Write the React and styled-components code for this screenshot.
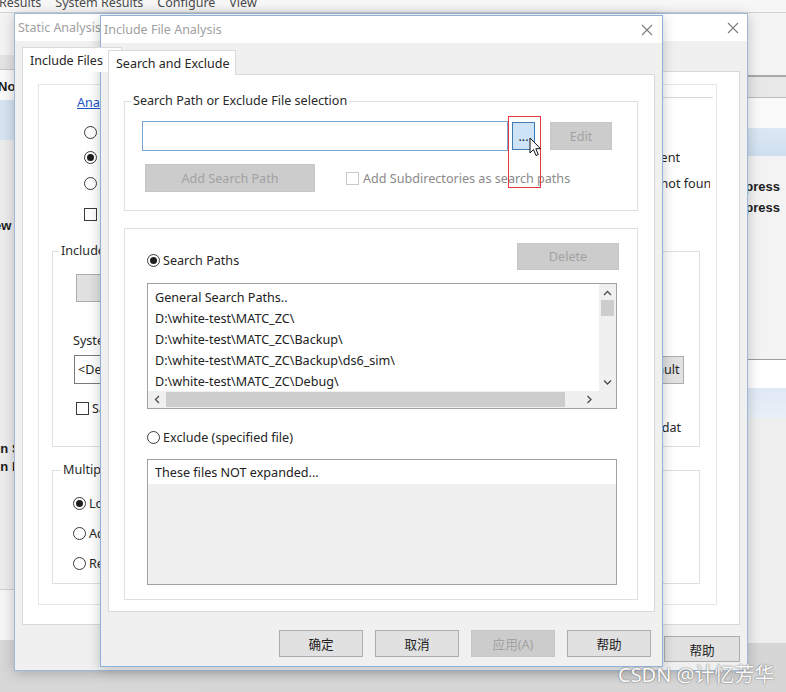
import React from "react";
import styled, { createGlobalStyle } from "styled-components";

const GlobalStyle = createGlobalStyle`
  * { box-sizing: border-box; }
  body {
    margin: 0;
    background: #d8d8d8;
    font-family: "Noto Sans", "Noto Sans CJK SC", sans-serif;
    font-size: 12.6px;
    color: #262626;
  }
`;

const Desktop = styled.div`
  position: relative;
  width: 786px;
  height: 692px;
  overflow: hidden;
  background: #d8d8d8;
`;

/* ---------- application behind the dialogs ---------- */

const AppFrame = styled.div`
  display: flex;
  flex-direction: column;
  height: 100%;
`;

const MenuBar = styled.div`
  height: 13px;
  flex-shrink: 0;
  display: flex;
  gap: 14px;
  overflow: hidden;
  background: #f7f7f7;
  border-bottom: 1px solid #d4d4d4;
  font-size: 12.5px;
  line-height: 12px;
  color: #4a4a4a;
`;

const MenuItem = styled.span`
  margin-top: -3px;
  white-space: nowrap;
  &:first-child {
    margin-left: -1px;
  }
`;

const Workspace = styled.div`
  flex: 1;
  display: flex;
  min-height: 0;
`;

const Pane = styled.div`
  display: flex;
  flex-direction: column;
  width: ${p => (p.$w ? `${p.$w}px` : "auto")};
  flex: ${p => (p.$w ? "none" : 1)};
  overflow: hidden;
`;

const Band = styled.div`
  height: ${p => (p.$h ? `${p.$h}px` : "auto")};
  flex: ${p => (p.$h ? "none" : 1)};
  background: ${p => p.$bg};
  border-bottom: ${p => (p.$line ? `${p.$lw || 1}px solid ${p.$line}` : "none")};
  display: flex;
  flex-direction: column;
  align-items: ${p => (p.$right ? "flex-end" : "flex-start")};
  padding-right: ${p => (p.$right ? 6 : 0)}px;
`;

const PaneText = styled.div`
  font-family: "Liberation Sans", Arial, sans-serif;
  font-weight: bold;
  font-size: 13px;
  line-height: 16px;
  color: #1c1c1c;
  white-space: nowrap;
  margin-top: ${p => p.$top || 0}px;
  margin-left: ${p => p.$shift || 0}px;
`;

/* ---------- windows ---------- */

const Window = styled.div`
  position: absolute;
  left: ${p => p.$x}px;
  top: ${p => p.$y}px;
  width: ${p => p.$w}px;
  height: ${p => p.$h}px;
  display: flex;
  flex-direction: column;
  background: #f0f0f0;
  border: 1px solid ${p => p.$edge};
  box-shadow: 0 2px 12px rgba(0, 0, 0, 0.22);
`;

const TitleBar = styled.div`
  height: 27px;
  flex-shrink: 0;
  display: flex;
  align-items: center;
  justify-content: space-between;
  padding: 0 ${p => p.$pr}px 0 ${p => p.$pl}px;
  background: #ffffff;
  color: #a0a0a0;
  font-size: 12.5px;
  white-space: nowrap;
`;

const WindowBody = styled.div`
  flex: 1;
  min-height: 0;
  display: flex;
  flex-direction: column;
  padding: ${p => p.$pad};
`;

const Tab = styled.div`
  align-self: flex-start;
  position: relative;
  z-index: 1;
  height: 25px;
  width: ${p => p.$w}px;
  padding: 0 7px;
  display: flex;
  align-items: center;
  background: #ffffff;
  border: 1px solid #d9d9d9;
  border-bottom: none;
  white-space: nowrap;
  overflow: hidden;
  font-size: 12.5px;
  color: #262626;
`;

const TabPanel = styled.div`
  flex: 1;
  min-height: 0;
  margin-top: -1px;
  background: #ffffff;
  border: 1px solid #d9d9d9;
  display: flex;
  flex-direction: column;
  padding: ${p => p.$pad};
`;

const InnerPanel = styled.div`
  flex: 1;
  min-height: 0;
  border: 1px solid #e6e6e6;
  padding: 11px 16px 0 13px;
  display: flex;
  flex-direction: column;
  overflow: hidden;
`;

const Footer = styled.div`
  flex-shrink: 0;
  display: flex;
  justify-content: flex-end;
  gap: ${p => p.$gap}px;
  margin-top: ${p => p.$mt}px;
  padding-right: ${p => p.$pr || 0}px;
`;

const GroupBox = styled.fieldset`
  margin: ${p => p.$mt || 0}px 0 0 0;
  min-width: 0;
  border: 1px solid #dfdfdf;
  padding: ${p => p.$pad};
  display: flex;
  flex-direction: column;
`;

const Legend = styled.legend`
  padding: 0 2px;
  margin-left: ${p => p.$ml}px;
  line-height: 16px;
  color: #2a2a2a;
  white-space: nowrap;
`;

const Frame = styled.div`
  margin-top: ${p => p.$mt || 0}px;
  border: 1px solid #e0e0e0;
  padding: ${p => p.$pad};
  display: flex;
  flex-direction: column;
`;

const Row = styled.div`
  display: flex;
  align-items: ${p => p.$align || "center"};
  justify-content: ${p => p.$justify || "flex-start"};
  margin-top: ${p => p.$mt || 0}px;
  margin-left: ${p => p.$ml || 0}px;
  margin-right: ${p => p.$mr || 0}px;
  height: ${p => (p.$h ? `${p.$h}px` : "auto")};
  white-space: nowrap;
`;

const Button = styled.div`
  flex-shrink: 0;
  width: ${p => p.$w}px;
  height: ${p => p.$h || 27}px;
  margin-left: ${p => p.$ml || 0}px;
  margin-right: ${p => p.$mr || 0}px;
  display: flex;
  align-items: center;
  justify-content: center;
  font-size: 12.6px;
  white-space: nowrap;
  background: ${p => (p.$off ? "#cccccc" : p.$hot ? "#cde4f7" : "#e1e1e1")};
  border: 1px solid ${p => (p.$off ? "#c6c6c6" : p.$hot ? "#3f7cb6" : "#adadad")};
  color: ${p => (p.$off ? "#a2a2a2" : "#1e1e1e")};
`;

const TextField = styled.div`
  flex: ${p => (p.$w ? "none" : 1)};
  width: ${p => (p.$w ? `${p.$w}px` : "auto")};
  height: ${p => p.$h}px;
  background: #ffffff;
  border: 1px solid ${p => (p.$focus ? "#7ba7d6" : "#7a7a7a")};
  padding-left: 3px;
  display: flex;
  align-items: center;
  white-space: nowrap;
  overflow: hidden;
`;

const Choice = styled.label`
  display: flex;
  align-items: center;
  gap: ${p => p.$gap || 3}px;
  height: 18px;
  margin-top: ${p => p.$mt || 0}px;
  margin-left: ${p => p.$ml || 0}px;
  color: ${p => (p.$off ? "#8a8a8a" : "#262626")};
  white-space: nowrap;
`;

const Radio = styled.span`
  width: 13px;
  height: 13px;
  flex-shrink: 0;
  border-radius: 50%;
  border: 1px solid #3a3a3a;
  background: #ffffff;
  display: flex;
  align-items: center;
  justify-content: center;
  &::after {
    content: "";
    width: 7px;
    height: 7px;
    border-radius: 50%;
    background: #1e1e1e;
    display: ${p => (p.$on ? "block" : "none")};
  }
`;

const Check = styled.span`
  width: 13px;
  height: 13px;
  flex-shrink: 0;
  border: 1px solid ${p => (p.$off ? "#c8c8c8" : "#3a3a3a")};
  background: #ffffff;
`;

const Tail = styled.span`
  margin-left: auto;
  margin-right: ${p => p.$mr}px;
  color: #262626;
`;

const TailClip = styled.span`
  margin-left: auto;
  margin-right: ${p => p.$mr}px;
  width: ${p => p.$w}px;
  overflow: hidden;
  display: flex;
  justify-content: flex-end;
  span {
    margin-right: ${p => p.$cut}px;
    flex-shrink: 0;
  }
`;

const LinkRow = styled.div`
  display: flex;
  align-items: flex-start;
  height: 14px;
  margin-left: 25px;
  margin-right: -13px;
  gap: 8px;
`;

const Link = styled.span`
  line-height: 14px;
  color: #2653c9;
  text-decoration: underline;
  white-space: nowrap;
`;

const Rule = styled.span`
  flex: 1;
  margin-top: 1px;
  border-top: 1px solid #d8d8d8;
`;

/* ---------- list boxes ---------- */

const ListBox = styled.div`
  margin-top: ${p => p.$mt}px;
  height: 126px;
  flex-shrink: 0;
  border: 1px solid #a3a3a3;
  display: grid;
  grid-template-columns: 1fr 17px;
  grid-template-rows: 1fr 17px;
  background: #ffffff;
  overflow: hidden;
`;

const Items = styled.div`
  padding: 3px 0 0 7px;
  overflow: hidden;
  min-height: 0;
`;

const Item = styled.div`
  height: 21px;
  line-height: 21px;
  white-space: nowrap;
  color: #222222;
`;

const VScroll = styled.div`
  background: #f0f0f0;
  display: flex;
  flex-direction: column;
  align-items: center;
  padding-top: 6px;
`;

const HScroll = styled.div`
  background: #f0f0f0;
  display: flex;
  align-items: center;
  padding: 1px 0;
`;

const Thumb = styled.div`
  background: #cdcdcd;
  width: ${p => p.$w}px;
  height: ${p => p.$h}px;
  margin: ${p => p.$m};
  flex-shrink: 0;
`;

const Spacer = styled.span`
  flex: ${p => (p.$size ? "none" : 1)};
  width: ${p => p.$size || 0}px;
  height: ${p => p.$size || 0}px;
`;

const Corner = styled.div`
  background: #f0f0f0;
`;

const PlainList = styled.div`
  margin-top: ${p => p.$mt}px;
  height: 126px;
  flex-shrink: 0;
  border: 1px solid #a3a3a3;
  background: #f0f0f0;
  display: flex;
  flex-direction: column;
`;

const HeadRow = styled.div`
  height: 24px;
  background: #ffffff;
  padding-left: 7px;
  display: flex;
  align-items: center;
  color: #222222;
`;

/* ---------- overlays ---------- */

const Highlight = styled.div`
  position: absolute;
  left: 508px;
  top: 116px;
  width: 33px;
  height: 72px;
  border: 1.5px solid #e23a3a;
  pointer-events: none;
`;

const Pointer = styled.svg`
  position: absolute;
  left: 529px;
  top: 137px;
`;

const Watermark = styled.div`
  position: absolute;
  left: 618px;
  top: 663px;
  font-family: "Noto Sans", "Noto Sans CJK SC", sans-serif;
  font-size: 20px;
  line-height: 23px;
  color: #fbfbfb;
  text-shadow: 0 0 1px #6f6f6f, 0 0 2px #8a8a8a;
  white-space: nowrap;
`;

const CloseIcon = () => (
  <svg width="12" height="12" viewBox="0 0 12 12">
    <path d="M1 1 L11 11 M11 1 L1 11" stroke="#7c7c7c" strokeWidth="1.1" fill="none" />
  </svg>
);

const Chevron = ({ dir }) => {
  const shapes = {
    up: "M1 5 L4.5 1.5 L8 5",
    down: "M1 1.5 L4.5 5 L8 1.5",
    left: "M5 1 L1.5 4.5 L5 8",
    right: "M1.5 1 L5 4.5 L1.5 8"
  };
  const wide = dir === "up" || dir === "down";
  return (
    <svg width={wide ? 9 : 7} height={wide ? 7 : 9} viewBox={wide ? "0 0 9 7" : "0 0 7 9"}>
      <path d={shapes[dir]} stroke="#4d4d4d" strokeWidth="1.3" fill="none" />
    </svg>
  );
};

const paths = [
  "General Search Paths..",
  "D:\\white-test\\MATC_ZC\\",
  "D:\\white-test\\MATC_ZC\\Backup\\",
  "D:\\white-test\\MATC_ZC\\Backup\\ds6_sim\\",
  "D:\\white-test\\MATC_ZC\\Debug\\"
];

const BackgroundApp = () => (
  <AppFrame>
    <MenuBar>
      <MenuItem>Results</MenuItem>
      <MenuItem>System Results</MenuItem>
      <MenuItem>Configure</MenuItem>
      <MenuItem>View</MenuItem>
    </MenuBar>
    <Workspace>
      <Pane $w={200}>
        <Band $h={42} $bg="#f3f3f3" />
        <Band $h={15} $bg="#e3e3e3" $line="#c9c9c9" />
        <Band $h={30} $bg="#fafafa">
          <PaneText $top={9} $shift={-2}>Normal</PaneText>
        </Band>
        <Band $h={40} $bg="#d6e3f1" />
        <Band $h={450} $bg="#ececec" $line="#cfcfcf">
          <PaneText $top={78} $shift={-18}>View</PaneText>
          <PaneText $top={207} $shift={-17}>Run Summary</PaneText>
          <PaneText $top={2} $shift={-17}>Run Info</PaneText>
        </Band>
        <Band $h={50} $bg="#f5f5f5" />
        <Band $bg="#d7d7d7" />
      </Pane>
      <Pane>
        <Band $h={64} $bg="#f4f4f4" $line="#a9a9a9" $lw={2} />
        <Band $h={21} $bg="#e8e8e8" $line="#bdbdbd" />
        <Band $h={30} $bg="#fafafa" />
        <Band $h={28} $bg="linear-gradient(#dbe7f4, #cfdff0)" />
        <Band $h={204} $bg="#f3f3f3" $line="#9c9c9c" $right>
          <PaneText $top={23}>Express</PaneText>
          <PaneText $top={5}>Express</PaneText>
        </Band>
        <Band $h={28} $bg="#ffffff" />
        <Band $h={30} $bg="linear-gradient(#dfe9f5, #e9eff7)" />
        <Band $h={225} $bg="#efefef" />
        <Band $bg="#d6d6d6" />
      </Pane>
    </Workspace>
  </AppFrame>
);

const StaticAnalysis = () => (
  <Window $x={14} $y={13} $w={734} $h={658} $edge="#9fb9da">
    <TitleBar $pl={3} $pr={8}>
      <span>Static Analysis</span>
      <CloseIcon />
    </TitleBar>
    <WindowBody $pad="6px 7px 8px 7px">
      <Tab $w={100}>Include Files</Tab>
      <TabPanel $pad="12px 22px 19px 15px">
        <InnerPanel>
          <LinkRow>
            <Link>Analysis include settings</Link>
            <Rule />
          </LinkRow>
          <Choice $mt={13} $ml={32}>
            <Radio />
            <span>Use project include paths</span>
          </Choice>
          <Row $mt={7} $ml={32} $h={18}>
            <Choice>
              <Radio $on />
              <span>Use default search paths</span>
            </Choice>
            <Tail $mr={20}>from the environment</Tail>
          </Row>
          <Row $mt={8} $ml={32} $h={18}>
            <Choice>
              <Radio />
              <span>Use search paths from file</span>
            </Choice>
            <TailClip $mr={-10} $w={120} $cut={-9}>
              <span>include file not found</span>
            </TailClip>
          </Row>
          <Choice $mt={13} $ml={32}>
            <Check />
            <span>Show all messages</span>
          </Choice>
          <GroupBox $mt={20} $pad="15px 15px 12px 21px">
            <Legend $ml={-15}>Include Files</Legend>
            <Button $w={140} $h={28} $ml={2}>
              Add Include
            </Button>
            <Row $mt={31} $ml={-1} $h={14}>
              System include file path
            </Row>
            <Row $mt={8} $h={29}>
              <TextField $h={29}>&lt;Default System Include Path&gt;</TextField>
              <Button $w={52} $h={28} $ml={10}>
                Default
              </Button>
            </Row>
            <Choice $mt={15} $ml={2}>
              <Check />
              <span>Save system include list</span>
            </Choice>
            <Row $mt={3} $h={14} $justify="flex-end" $mr={3}>
              sysinclude.dat
            </Row>
          </GroupBox>
          <GroupBox $mt={15} $pad="16px 15px 11px 20px">
            <Legend $ml={-12}>Multiple Include Files</Legend>
            <Choice>
              <Radio $on />
              <span>Load first occurrence</span>
            </Choice>
            <Choice $mt={12}>
              <Radio />
              <span>Add all occurrences</span>
            </Choice>
            <Choice $mt={12}>
              <Radio />
              <span>Report as error</span>
            </Choice>
          </GroupBox>
        </InnerPanel>
      </TabPanel>
      <Footer $gap={10} $mt={11}>
        <Button $w={76} $h={26}>确定</Button>
        <Button $w={76} $h={26}>取消</Button>
        <Button $w={76} $h={26} $off>应用(A)</Button>
        <Button $w={76} $h={26}>帮助</Button>
      </Footer>
    </WindowBody>
  </Window>
);

const IncludeFileAnalysis = () => (
  <Window $x={100} $y={15} $w={563} $h={652} $edge="#8fb0d8">
    <TitleBar $pl={3} $pr={9}>
      <span>Include File Analysis</span>
      <CloseIcon />
    </TitleBar>
    <WindowBody $pad="7px 7px 9px 7px">
      <Tab $w={128}>Search and Exclude</Tab>
      <TabPanel $pad="18px 16px 11px 15px">
        <GroupBox $pad="12px 17px 18px 17px">
          <Legend $ml={-11}>Search Path or Exclude File selection</Legend>
          <Row $h={30}>
            <TextField $w={366} $h={30} $focus />
            <Button $w={23} $h={28} $ml={4} $hot>
              ...
            </Button>
            <Button $w={62} $h={28} $ml={15} $off>
              Edit
            </Button>
          </Row>
          <Row $mt={13} $h={28}>
            <Button $w={170} $h={28} $ml={3} $off>
              Add Search Path
            </Button>
            <Choice $ml={31} $gap={4} $off>
              <Check $off />
              <span>Add Subdirectories as search paths</span>
            </Choice>
          </Row>
        </GroupBox>
        <Frame $mt={17} $pad="14px 20px 14px 22px">
          <Row $align="flex-start" $justify="space-between" $h={27}>
            <Choice $mt={8}>
              <Radio $on />
              <span>Search Paths</span>
            </Choice>
            <Button $w={102} $h={27} $mr={-2} $off>
              Delete
            </Button>
          </Row>
          <ListBox $mt={13}>
            <Items>
              {paths.map(p => (
                <Item key={p}>{p}</Item>
              ))}
            </Items>
            <VScroll>
              <Chevron dir="up" />
              <Thumb $w={13} $h={16} $m="3px 0 0 0" />
              <Spacer />
              <Chevron dir="down" />
              <Spacer $size={5} />
            </VScroll>
            <HScroll>
              <Spacer $size={6} />
              <Chevron dir="left" />
              <Thumb $w={399} $h={15} $m="0 0 0 5px" />
              <Spacer />
              <Chevron dir="right" />
              <Spacer $size={6} />
            </HScroll>
            <Corner />
          </ListBox>
          <Choice $mt={19}>
            <Radio />
            <span>Exclude (specified file)</span>
          </Choice>
          <PlainList $mt={13}>
            <HeadRow>These files NOT expanded...</HeadRow>
          </PlainList>
        </Frame>
      </TabPanel>
      <Footer $gap={12} $mt={18} $pr={4}>
        <Button $w={84}>确定</Button>
        <Button $w={84}>取消</Button>
        <Button $w={84} $off>
          应用(A)
        </Button>
        <Button $w={84}>帮助</Button>
      </Footer>
    </WindowBody>
  </Window>
);

export default () => (
  <React.Fragment>
    <GlobalStyle />
    <Desktop>
      <BackgroundApp />
      <StaticAnalysis />
      <IncludeFileAnalysis />
      <Highlight />
      <Pointer width="13" height="21" viewBox="0 0 13 21">
        <path
          d="M1 1 L1 16 L4.5 12.5 L7 18.5 L9.3 17.5 L6.8 11.7 L11.5 11.7 Z"
          fill="#ffffff"
          stroke="#111111"
          strokeWidth="1"
          strokeLinejoin="round"
        />
      </Pointer>
      <Watermark>CSDN @计忆芳华</Watermark>
    </Desktop>
  </React.Fragment>
);
